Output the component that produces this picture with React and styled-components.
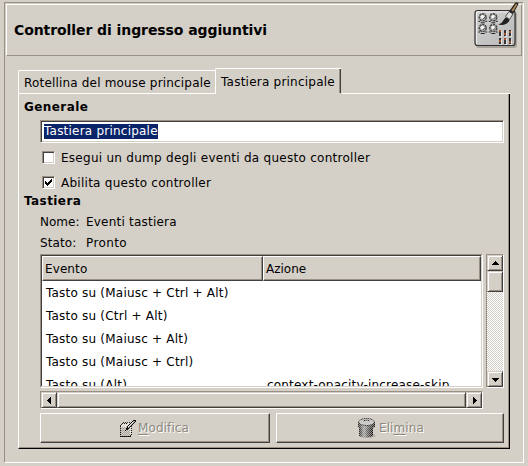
import React from "react";
import styled, { createGlobalStyle } from "styled-components";

const face = "#d4cfc7";
const shade = "#998f82";
const dark = "#404040";

const GlobalStyle = createGlobalStyle`
  * { box-sizing: border-box; }
  html, body { margin: 0; padding: 0; background: ${face}; overflow: hidden; }
  body { font-family: "DejaVu Sans", sans-serif; font-size: 12px; line-height: 15px; color: #000; }
`;

const Dialog = styled.div`
  width: 528px;
  height: 466px;
  padding: 2px 4px 3px;
  background: ${face};
`;

const Frame = styled.section`
  width: 520px;
  height: 461px;
  padding: 1px;
  border: 1px solid;
  border-color: ${shade} #fff #fff ${shade};
`;

const Header = styled.header`
  display: flex;
  align-items: center;
  justify-content: space-between;
  height: 52px;
  padding: 0 3px 0 7px;
  border: 1px solid;
  border-color: #fff ${shade} ${shade} #fff;
`;

const Text = styled.span`
  display: block;
  white-space: pre;
  letter-spacing: ${(p) => p.$track || 0}px;
`;

const Title = styled.h1`
  margin: 0;
  font-size: 14px;
  line-height: 20px;
  font-weight: bold;
  white-space: pre;
  letter-spacing: -0.08px;
`;

const Notebook = styled.div`
  margin: 12px 12px 0;
`;

const Tabs = styled.div`
  display: flex;
  align-items: flex-end;
  height: 25px;
`;

const Tab = styled.div`
  display: flex;
  align-items: center;
  width: ${(p) => p.$width}px;
  height: ${(p) => (p.$active ? 25 : 23)}px;
  padding: 3px 0 0 5px;
  border: 0 solid #fff;
  border-width: 1px 0 0 1px;
  border-top-left-radius: 2px;
  box-shadow: ${(p) => (p.$active ? `inset -1px 0 ${dark}, inset -2px 0 ${shade}` : "none")};
`;

const PanelTop = styled.div`
  display: flex;
  justify-content: space-between;
  height: 1px;

  &::before { content: ""; width: 198px; background: #fff; }
  &::after { content: ""; width: 168px; background: #fff; }
`;

const Panel = styled.div`
  width: 492px;
  height: 355px;
  padding: 6px 4px 4px 5px;
  border: 0 solid;
  border-width: 0 1px 1px 1px;
  border-color: #fff #000 #000 #fff;
  box-shadow: inset -1px -1px ${shade};
`;

const GroupTitle = styled.h2`
  margin: 0;
  height: 15px;
  font-size: 12px;
  line-height: 15px;
  font-weight: bold;
  white-space: pre;
  letter-spacing: 0.42px;
`;

const Group = styled.div`
  padding-left: 16px;
`;

const Entry = styled.div`
  width: 464px;
  height: 23px;
  margin-top: 5px;
  padding: 3px;
  border: 1px solid;
  border-color: ${shade} #fff #fff ${shade};
  background: #fff;
  box-shadow: inset 1px 1px ${dark}, inset -1px -1px ${face};
`;

const Selection = styled.span`
  display: block;
  width: 114px;
  height: 15px;
  color: #fff;
  background: #0a246a;
  white-space: pre;
  letter-spacing: 0.22px;
`;

const Checks = styled.div`
  height: 51px;
  padding-top: 2px;
`;

const CheckRow = styled.label`
  display: flex;
  align-items: center;
  gap: 6px;
  height: 25px;
  padding-left: 2px;

  ${Text} { margin-top: 2px; }
`;

const CheckBox = styled.span`
  display: flex;
  width: 13px;
  height: 13px;
  padding: 1px;
  border: 1px solid;
  border-color: ${shade} #fff #fff ${shade};
  background: #fff;
  box-shadow: inset 1px 1px ${dark}, inset -1px -1px ${face};
`;

const Facts = styled.dl`
  display: grid;
  grid-template-columns: 46px auto;
  grid-auto-rows: 21px;
  align-items: center;
  margin: 3px 0 0;
  dd, dt { margin: 0; }
`;

const Browser = styled.div`
  display: grid;
  grid-template-columns: 443px 18px;
  grid-template-rows: 134px 18px;
  gap: 3px;
`;

const List = styled.div`
  height: 134px;
  overflow: hidden;
  padding: 1px;
  border: 1px solid;
  border-color: ${shade} #fff #fff ${shade};
  background: linear-gradient(${face}, ${face}) 0 100% / 100% 1px no-repeat,
    linear-gradient(${face}, ${face}) 100% 0 / 1px 100% no-repeat,
    linear-gradient(${dark}, ${dark}) 0 0 / 1px 100% no-repeat,
    linear-gradient(${dark}, ${dark}) 0 0 / 100% 1px no-repeat, #fff;
`;

const Rows = styled.div`
  height: 130px;
  overflow: hidden;
`;

const Columns = styled.div`
  display: grid;
  grid-template-columns: 221px 218px;
`;

const ColumnHead = styled.div`
  height: 25px;
  padding: 5px 2px 3px;
  border: 1px solid;
  border-color: #fff ${dark} ${dark} #fff;
  background: ${face};
  box-shadow: inset -1px -1px ${shade};
`;

const Cell = styled.div`
  height: 23px;
  padding: 5px 4px 0;
`;

const Trough = styled.div`
  display: flex;
  flex-direction: ${(p) => (p.$vertical ? "column" : "row")};
  border: 1px solid;
  border-color: ${shade} #fff #fff ${shade};
  background: conic-gradient(#fff 25%, ${face} 0 50%, #fff 0 75%, ${face} 0) 0 0 / 2px 2px;
`;

const Bevel = styled.div`
  display: flex;
  align-items: center;
  justify-content: center;
  width: ${(p) => p.$w || 16}px;
  height: ${(p) => p.$h || 16}px;
  border: 1px solid;
  border-color: ${face} ${dark} ${dark} ${face};
  background: ${face};
  box-shadow: inset 1px 1px #fff, inset -1px -1px ${shade};
  margin-top: ${(p) => (p.$end ? "auto" : 0)};
`;

const Actions = styled.div`
  display: grid;
  grid-template-columns: 230px 228px;
  gap: 6px;
  margin-top: 4px;
`;

const Button = styled.button`
  display: flex;
  align-items: center;
  height: 30px;
  padding: 0 0 0 ${(p) => p.$inset}px;
  border: 1px solid;
  border-color: #fff ${dark} ${dark} #fff;
  background: ${face};
  box-shadow: inset -1px -1px ${shade};
  font: inherit;
  color: #8d897f;
  text-shadow: 1px 1px #fff;
  letter-spacing: 0.1px;
  u { text-underline-offset: 2px; text-decoration-thickness: 1px; }
`;

const Glyph = styled.svg`
  display: block;
  flex: none;
  overflow: visible;
  margin-right: ${(p) => p.$gap || 0}px;
`;

const arrows = {
  up: "M5 3h1v1h1v1h1v1h1v1H2V6h1V5h1V4h1z",
  down: "M2 4h7v1H8v1H7v1H6v1H5V7H4V6H3V5H2z",
  left: "M6 2h1v7H6V8H5V7H4V6H3V5h1V4h1V3h1z",
  right: "M4 2h1v1h1v1h1v1h1v1H7v1H6v1H5v1H4z",
};

const Arrow = ({ dir }) => (
  <Glyph width="11" height="11" shapeRendering="crispEdges">
    <path d={arrows[dir]} />
  </Glyph>
);

const Dither = ({ id }) => (
  <pattern id={id} width="2" height="2" patternUnits="userSpaceOnUse">
    <path d="M0 0h1v1H0zM1 1h1v1H1z" fill={face} />
  </pattern>
);

const EditIcon = () => (
  <Glyph width="18" height="18" $gap={1} shapeRendering="crispEdges">
    <defs><Dither id="edit-dither" /></defs>
    <path d="M1 7l3-4h6l2 3v9l-1 2H1z" fill="#f4f2ee" stroke="#33312e" />
    <path d="M1 8h10v9H1z" fill="#aaa69f" />
    <path d="M0 1h17v17H0z" fill="url(#edit-dither)" />
    <path d="M3 4h5M1 7v10h11V9" fill="none" stroke="#111" strokeDasharray="1 1" />
    <path d="M7 11l2-4 6-6 2 1-7 7-3 2z" fill="#aaa" stroke="#111" />
    <path d="M9 8l5-5" stroke="#eee" />
  </Glyph>
);

const TrashIcon = () => (
  <Glyph width="20" height="22" $gap={3}>
    <defs>
      <Dither id="trash-dither" />
      <linearGradient id="can">
        <stop offset="0" stopColor="#222" /><stop offset=".35" stopColor="#aaa" />
        <stop offset=".6" stopColor="#666" /><stop offset="1" stopColor="#111" />
      </linearGradient>
    </defs>
    <ellipse cx="11.5" cy="18.5" rx="8" ry="2.5" fill="#aaa49b" />
    <path d="M3 9v10q6.500 3 14 0V9z" fill="url(#can)" />
    <path d="M2 5v5q8 3.500 17 0V5z" fill="url(#can)" />
    <ellipse cx="10.5" cy="5" rx="8" ry="3.5" fill="#ccc" stroke="#333" />
    <path d="M7.500 4q3-2 6 0" fill="none" stroke="#222" />
    <path d="M0 0h20v22H0z" fill="url(#trash-dither)" shapeRendering="crispEdges" opacity=".6" />
  </Glyph>
);

const knobs = [[10.7, 10.3], [21.3, 10.3], [10.7, 21], [21.3, 21]];
const sliders = [[27, 23, 0], [32, 23, 3], [37, 23, 1], [27, 31, 2], [32, 31, 0], [37, 31, 3]];

const ControllerIcon = () => (
  <Glyph width="46" height="46" viewBox="0 0 46 46">
    <defs>
      <linearGradient id="plate" x2="1" y2="1">
        <stop offset="0" stopColor="#d2d2d2" /><stop offset="1" stopColor="#b9b9b9" />
      </linearGradient>
    </defs>
    <rect x="4" y="5" width="41" height="36" rx="3" fill="#77736c" opacity=".5" />
    <rect x="3" y="3.500" width="40" height="35" rx="2.500" fill="url(#plate)" stroke="#303030" strokeWidth="1.2" />
    <path d="M4.500 37V5H41" fill="none" stroke="#eee" />
    {knobs.map(([x, y]) => (
      <g key={`${x}-${y}`}>
        <circle cx={x} cy={y} r="3.5" fill="#b4b4b0" stroke="#484848" strokeWidth="1.5" strokeDasharray="2.4 .7" />
        <circle cx={x - 0.3} cy={y - 0.5} r="1.7" fill="#f5f5f5" />
        <path d={`M${x} ${y + 2}l2.500-2.500`} stroke="#555" />
        <path d={`M${x - 4.5} ${y + 4}h2m5 0h2M${x - 2} ${y + 5.5}h4`} stroke="#222" />
      </g>
    ))}
    {sliders.map(([x, y, o]) => (
      <g key={`${x}-${y}`} shapeRendering="crispEdges">
        <path d={`M${x + 1} ${y + 1}h2v6h-2z`} fill="#e2e2e2" />
        <path d={`M${x} ${y}h2v6h-2z`} fill="#333" />
        <path d={`M${x} ${y + o}h2v2h-2z`} fill="#a5532f" />
      </g>
    ))}
    <path d="M26 17.500q4-1 5.500-4.500q2-3.500 5-3l1 1.500q.5 3-3.500 5.500q-3.500 1.500-8 .5z" fill="#202020" />
    <path d="M33.500 9.500l3.500-5 4 2.500-3.500 5.500z" fill="#ddd" stroke="#444" strokeWidth=".9" />
    <path d="M37 4.500l6-8.500q3-2 3.500 1L41 7z" fill="#292522" />
    <path d="M39.500 3.500l4-6q1.500-1.500 1.500.5L41 4.500z" fill="#b68b5d" />
  </Glyph>
);

const events = [
  ["Tasto su (Maiusc + Ctrl + Alt)", ""],
  ["Tasto su (Ctrl + Alt)", ""],
  ["Tasto su (Maiusc + Alt)", ""],
  ["Tasto su (Maiusc + Ctrl)", ""],
  ["Tasto su (Alt)", "context-opacity-increase-skip"],
];

export default function App() {
  return (
    <Dialog>
      <GlobalStyle />
      <Frame>
        <Header>
          <Title>Controller di ingresso aggiuntivi</Title>
          <ControllerIcon />
        </Header>
        <Notebook>
          <Tabs>
            <Tab $width={197}><Text $track={0.18}>Rotellina del mouse principale</Text></Tab>
            <Tab $width={126} $active><Text $track={0.23}>Tastiera principale</Text></Tab>
          </Tabs>
          <PanelTop />
          <Panel>
            <GroupTitle>Generale</GroupTitle>
            <Group>
              <Entry><Selection>Tastiera principale</Selection></Entry>
              <Checks>
                <CheckRow>
                  <CheckBox />
                  <Text $track={0.27}>Esegui un dump degli eventi da questo controller</Text>
                </CheckRow>
                <CheckRow>
                  <CheckBox>
                    <Glyph width="9" height="9" shapeRendering="crispEdges">
                      <path d="M1 3h1v1h1v1h1V4h1V3h1V2h1V1h1v3H7v1H6v1H5v1H4v1H3V7H2V6H1z" />
                    </Glyph>
                  </CheckBox>
                  <Text $track={0.26}>Abilita questo controller</Text>
                </CheckRow>
              </Checks>
            </Group>
            <GroupTitle>Tastiera</GroupTitle>
            <Group>
              <Facts>
                <dt><Text>Nome:</Text></dt>
                <dd><Text $track={0.22}>Eventi tastiera</Text></dd>
                <dt><Text $track={0.1}>Stato:</Text></dt>
                <dd><Text $track={0.4}>Pronto</Text></dd>
              </Facts>
              <Browser>
                <List>
                  <Rows>
                    <Columns>
                      <ColumnHead><Text $track={0.1}>Evento</Text></ColumnHead>
                      <ColumnHead><Text>Azione</Text></ColumnHead>
                      {events.map(([event, action]) => (
                        <React.Fragment key={event}>
                          <Cell><Text $track={0.21}>{event}</Text></Cell>
                          <Cell><Text $track={0.19}>{action}</Text></Cell>
                        </React.Fragment>
                      ))}
                    </Columns>
                  </Rows>
                </List>
                <Trough $vertical>
                  <Bevel><Arrow dir="up" /></Bevel>
                  <Bevel $h={21} />
                  <Bevel $end><Arrow dir="down" /></Bevel>
                </Trough>
                <Trough>
                  <Bevel><Arrow dir="left" /></Bevel>
                  <Bevel $w={409} />
                  <Bevel><Arrow dir="right" /></Bevel>
                </Trough>
              </Browser>
              <Actions>
                <Button $inset={78}><EditIcon /><span><u>M</u>odifica</span></Button>
                <Button $inset={79}><TrashIcon /><span>Eli<u>m</u>ina</span></Button>
              </Actions>
            </Group>
          </Panel>
        </Notebook>
      </Frame>
    </Dialog>
  );
}
